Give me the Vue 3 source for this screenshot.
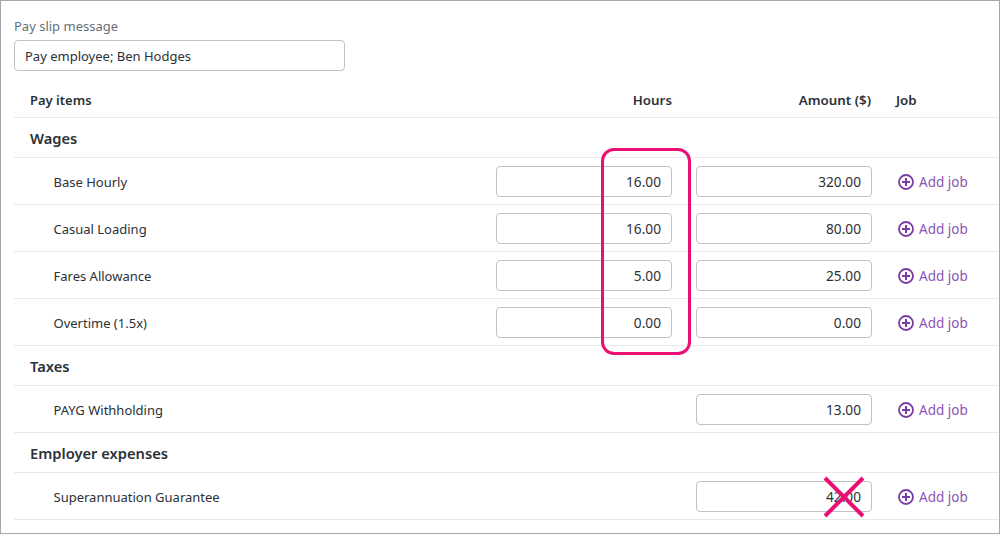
<script setup>
const wages = [
  { name: 'Base Hourly', hours: '16.00', amount: '320.00' },
  { name: 'Casual Loading', hours: '16.00', amount: '80.00' },
  { name: 'Fares Allowance', hours: '5.00', amount: '25.00' },
  { name: 'Overtime (1.5x)', hours: '0.00', amount: '0.00' },
]
const groups = [
  { title: 'Wages', rows: wages },
  { title: 'Taxes', rows: [{ name: 'PAYG Withholding', amount: '13.00' }] },
  { title: 'Employer expenses', rows: [{ name: 'Superannuation Guarantee', amount: '42.00' }] },
]
</script>

<template>
  <div class="frame">
    <div class="field-label">Pay slip message</div>
    <div class="message">Pay employee; Ben Hodges</div>

    <div class="row head">
      <div>Pay items</div>
      <div class="right">Hours</div>
      <div class="right">Amount ($)</div>
      <div>Job</div>
    </div>

    <template v-for="group in groups" :key="group.title">
      <div class="group-title">{{ group.title }}</div>
      <div v-for="item in group.rows" :key="item.name" class="row item">
        <div class="name">{{ item.name }}</div>
        <div v-if="item.hours" class="box">{{ item.hours }}</div>
        <div v-else></div>
        <div class="box">{{ item.amount }}</div>
        <div class="add">
          <svg width="16" height="16" viewBox="0 0 16 16" fill="none" stroke="#7a3ba5">
            <circle cx="8" cy="8" r="7" stroke-width="1.8" />
            <path d="M8 4v8M4 8h8" stroke-width="2" />
          </svg>
          <span>Add job</span>
        </div>
      </div>
    </template>

    <div class="highlight"></div>
    <svg class="cross" width="42" height="42" viewBox="0 0 42 42" stroke="#ea0f73" stroke-width="4">
      <path d="M2 2l38 38M40 2L2 40" />
    </svg>
  </div>
</template>

<style>
html, body { margin: 0; background: #fff; }
</style>

<style scoped>
.frame {
  position: relative;
  box-sizing: border-box;
  width: 1000px;
  height: 534px;
  overflow: hidden;
  border: 1px solid #a6a6a6;
  padding: 16px 1px 0 13px;
  background: #fff;
  font-family: "Noto Sans", "Open Sans", sans-serif;
  font-size: 13px;
  color: #2b3138;
}
.field-label {
  height: 23px;
  line-height: 18px;
  color: #66707a;
}
.message {
  box-sizing: border-box;
  width: 331px;
  height: 31px;
  padding-left: 10px;
  line-height: 31px;
  border: 1px solid #c0c2c8;
  border-radius: 4px;
}
.row {
  display: grid;
  column-gap: 24px;
  align-items: center;
  border-bottom: 1px solid #e8e9eb;
  box-sizing: border-box;
}
.head {
  height: 47px;
  padding: 12px 0 0 16px;
  grid-template-columns: 442px 176px 176px 1fr;
  font-weight: 600;
}
.right { text-align: right; }
.head > :nth-child(n + 2) { font-size: 13.35px; }
.head > :nth-child(3) { padding-right: 1px; }
.group-title {
  box-sizing: border-box;
  height: 40px;
  padding-left: 16px;
  line-height: 41px;
  font-size: 14.7px;
  font-weight: 600;
  border-bottom: 1px solid #e8e9eb;
}
.item {
  height: 47px;
  padding-left: 40px;
  grid-template-columns: 418px 176px 176px 1fr;
}
.name { padding-top: 2px; margin-left: -0.5px; }
.box {
  box-sizing: border-box;
  height: 31px;
  padding-right: 10px;
  line-height: 30px;
  text-align: right;
  border: 1px solid #c0c2c8;
  border-radius: 4px;
  font-size: 13.7px;
}
.add {
  display: flex;
  align-items: center;
  gap: 5px;
  margin-left: 2px;
  padding-top: 2px;
  color: #8a55b5;
  font-size: 13.5px;
}
.highlight {
  position: absolute;
  left: 600px;
  top: 147px;
  width: 90px;
  height: 207px;
  box-sizing: border-box;
  border: 3px solid #ea0f73;
  border-radius: 13px;
}
.cross {
  position: absolute;
  left: 822px;
  top: 475px;
}
</style>
